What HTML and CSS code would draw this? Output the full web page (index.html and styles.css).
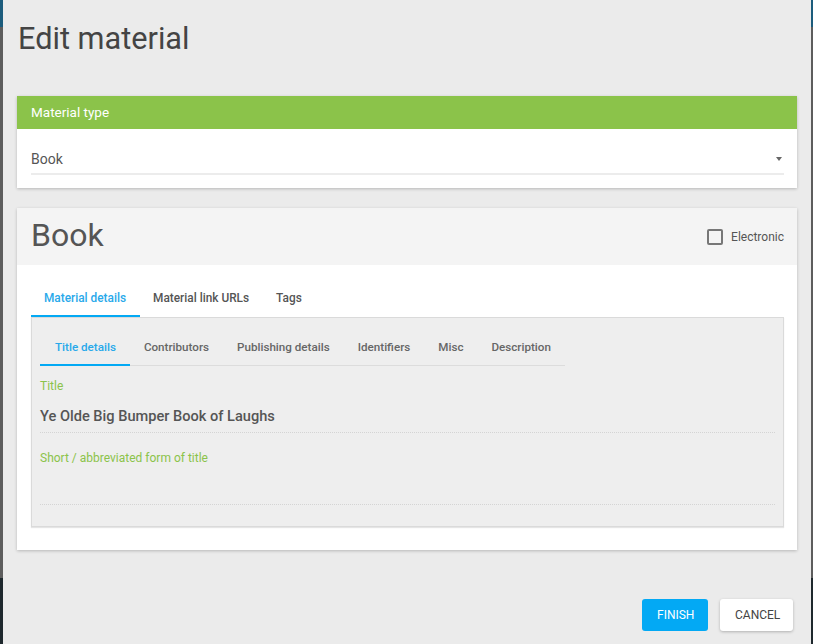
FILE: index.html
```html
<!DOCTYPE html>
<html lang="en">
<head>
<meta charset="utf-8">
<title>Edit material</title>
<link rel="stylesheet" href="styles.css">
</head>
<body>
<div class="dialog">
  <h1 class="dialog-title">Edit material</h1>

  <section class="card type-card">
    <header class="type-header">Material type</header>
    <div class="type-body">
      <div class="select">
        <span class="select-value">Book</span>
        <span class="select-arrow"></span>
      </div>
    </div>
  </section>

  <section class="card book-card">
    <header class="book-header">
      <h2 class="book-title">Book</h2>
      <label class="checkbox">
        <span class="checkbox-box"></span>
        <span class="checkbox-label">Electronic</span>
      </label>
    </header>
    <div class="book-body">
      <nav class="tabs">
        <span class="tab active">Material details</span>
        <span class="tab">Material link URLs</span>
        <span class="tab">Tags</span>
      </nav>
      <div class="panel">
        <nav class="subtabs">
          <span class="subtab active">Title details</span>
          <span class="subtab">Contributors</span>
          <span class="subtab">Publishing details</span>
          <span class="subtab">Identifiers</span>
          <span class="subtab">Misc</span>
          <span class="subtab">Description</span>
        </nav>
        <div class="fields">
          <div class="field">
            <div class="field-label">Title</div>
            <div class="field-value">Ye Olde Big Bumper Book of Laughs</div>
          </div>
          <div class="field">
            <div class="field-label">Short / abbreviated form of title</div>
            <div class="field-value"></div>
          </div>
        </div>
      </div>
    </div>
  </section>

  <footer class="actions">
    <button class="btn btn-primary">FINISH</button>
    <button class="btn btn-default">CANCEL</button>
  </footer>
</div>
</body>
</html>
```

FILE: styles.css
```css
* { box-sizing: border-box; }

html, body { height: 100%; }

body {
  margin: 0;
  font-family: Roboto, "Noto Sans", "Liberation Sans", sans-serif;
  background: linear-gradient(to bottom, #1c5c7c 0, #1c5c7c 27px, #5d5d5d 27px, #5d5d5d 578px, #1e282d 578px);
  overflow: hidden;
}

.dialog {
  margin: 0 2px 0 3px;
  height: 644px;
  background: #ebebeb;
  padding: 21px 14px 0 14px;
  display: flex;
  flex-direction: column;
}

.dialog-title {
  margin: 0 0 39px 1px;
  font-size: 30.7px;
  line-height: 36px;
  font-weight: 400;
  color: #444;
}

.card {
  background: #fff;
  box-shadow: 0 1px 3px rgba(0, 0, 0, 0.22);
}

.type-header {
  background: #8bc34a;
  color: #fff;
  font-size: 13.5px;
  line-height: 33px;
  height: 33px;
  padding: 0 14px;
}

.type-body {
  padding: 15px 13px 13px 14px;
}

.select {
  display: flex;
  align-items: center;
  justify-content: space-between;
  height: 31px;
  border-bottom: 2px solid #ececec;
  padding-right: 2px;
}

.select-value {
  font-size: 14px;
  color: #555;
}

.select-arrow {
  width: 0;
  height: 0;
  border-left: 3px solid transparent;
  border-right: 3px solid transparent;
  border-top: 4px solid #666;
  margin-top: 1px;
}

.book-card {
  margin-top: 20px;
}

.book-header {
  background: #f4f4f4;
  height: 57px;
  padding: 0 13px 0 14px;
  display: flex;
  align-items: center;
  justify-content: space-between;
}

.book-title {
  margin: 0 0 3px 0;
  font-size: 32px;
  line-height: 40px;
  font-weight: 400;
  color: #555;
}

.checkbox {
  display: flex;
  align-items: center;
  gap: 8px;
}

.checkbox-box {
  width: 16px;
  height: 16px;
  border: 2px solid #777;
  border-radius: 2px;
}

.checkbox-label {
  font-size: 12px;
  color: #555;
}

.book-body {
  padding: 16px 13px 23px 14px;
}

.tabs {
  display: flex;
}

.tab {
  height: 36px;
  line-height: 35px;
  padding: 0 14px 0 13px;
  font-size: 11.85px;
  font-weight: 500;
  color: #555;
  border-bottom: 2px solid transparent;
}

.tab.active {
  color: #29a9ea;
  border-bottom-color: #03a9f4;
}

.panel {
  background: #eeeeee;
  border: 1px solid #dadada;
  box-shadow: 0 1px 1px rgba(0, 0, 0, 0.1);
  padding: 13px 8px 21px 8px;
}

.subtabs {
  display: inline-flex;
  box-shadow: inset 0 -1px 0 #dcdcdc;
}

.subtab {
  height: 35px;
  line-height: 33px;
  padding: 0 14px;
  font-size: 11.65px;
  font-weight: 500;
  color: #666;
  border-bottom: 2px solid transparent;
}

.subtab.active {
  color: #29a9ea;
  padding-left: 15px;
  border-bottom-color: #03a9f4;
}

.field {
  padding-top: 17px;
  padding-bottom: 5px;
  border-bottom: 1px dotted #d4d4d4;
}

.field:first-child {
  padding-top: 12px;
}

.field-label {
  font-size: 12px;
  line-height: 16px;
  color: #8bc34a;
}

.field-value {
  margin-top: 11px;
  height: 22px;
  line-height: 22px;
  font-size: 14.6px;
  font-weight: 500;
  color: #555;
}

.actions {
  margin-top: 49px;
  display: flex;
  justify-content: flex-end;
  gap: 12px;
  padding-right: 4px;
}

.btn {
  height: 32px;
  padding: 0 15px;
  border: none;
  border-radius: 3px;
  font-family: Roboto, "Noto Sans", "Liberation Sans", sans-serif;
  font-size: 12px;
  cursor: pointer;
}

.btn-primary {
  background: #03a9f4;
  color: #fff;
  width: 66px;
}

.btn-default {
  background: #fff;
  color: #444;
  width: 73px;
  box-shadow: 0 1px 3px rgba(0, 0, 0, 0.25);
}
```
